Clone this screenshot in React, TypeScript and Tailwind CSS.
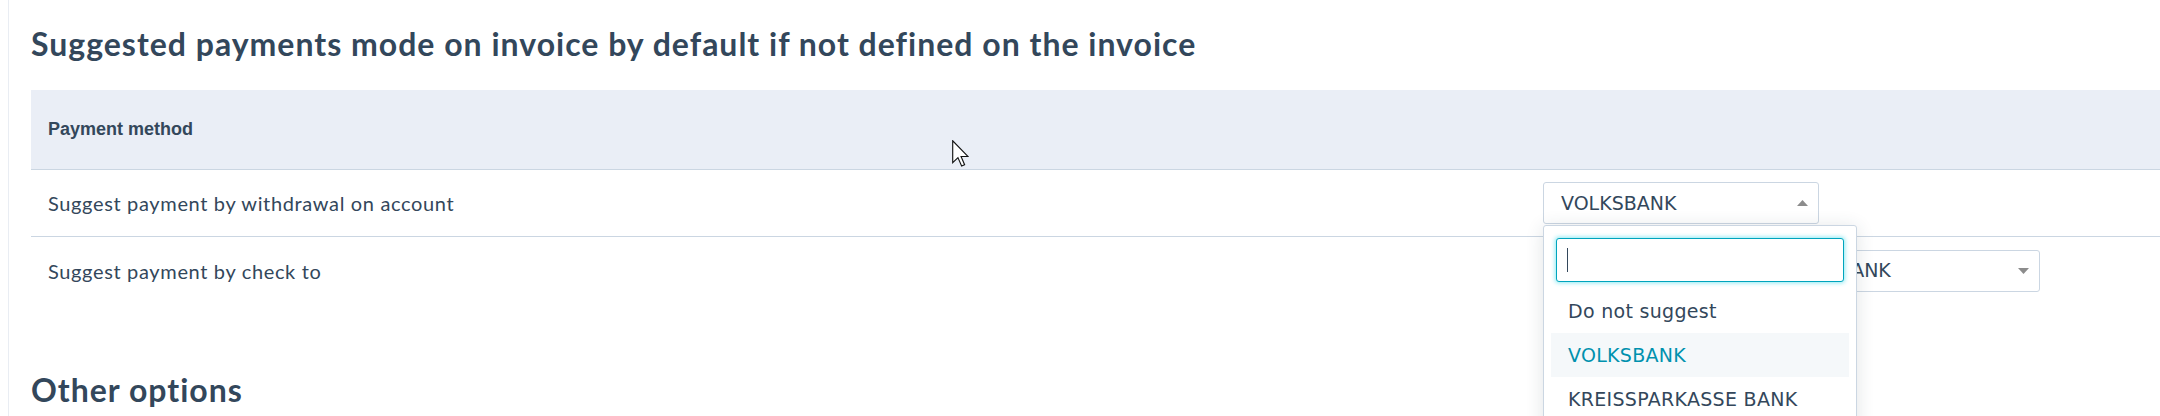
import React from "react";

const geo = { fontFamily: "Lato, 'Open Sans', sans-serif" };
const wide = { fontFamily: "'DejaVu Sans', Verdana, sans-serif" };

function Caret({ up }: { up?: boolean }) {
  return (
    <svg width="11" height="6" viewBox="0 0 11 6" className="shrink-0">
      {up ? (
        <path d="M0 6 L5.5 0 L11 6 Z" fill="#8c8c8c" />
      ) : (
        <path d="M0 0 L5.5 6 L11 0 Z" fill="#8c8c8c" />
      )}
    </svg>
  );
}

function BankSelect({
  value,
  open,
  className,
}: {
  value: string;
  open?: boolean;
  className: string;
}) {
  return (
    <div
      className={`flex h-[42px] items-center justify-between rounded-[3px] border border-[#cbd6e2] bg-white pl-[17px] pr-[10px] text-[19px] text-[#33475b] ${className}`}
      style={wide}
    >
      <span>{value}</span>
      <Caret up={open} />
    </div>
  );
}

const options = ["Do not suggest", "VOLKSBANK", "KREISSPARKASSE BANK", "POSTBANK"];

function DropdownPanel() {
  return (
    <div className="absolute left-0 top-[43px] z-10 h-[220px] w-[314px] rounded-t-[3px] border border-[#cbd6e2] bg-white shadow-[0_2px_18px_0_rgba(45,62,80,0.14)]">
      <div className="px-[12px] pt-[12px]">
        <div className="flex h-[44px] items-center rounded-[3px] border border-[#00a4bd] bg-white pl-[10px] shadow-[0_0_4px_1px_rgba(0,208,228,0.45)]">
          <span className="h-[24px] w-px bg-[#33475b]" />
        </div>
      </div>
      <ul className="px-[7px] pt-[7px]" style={wide}>
        {options.map((o) => (
          <li
            key={o}
            className={`flex h-[44px] items-center whitespace-nowrap px-[17px] text-[19px] tracking-[0.3px] ${
              o === "VOLKSBANK"
                ? "bg-[#f5f8fa] text-[#0091ae]"
                : "text-[#33475b]"
            }`}
          >
            {o}
          </li>
        ))}
      </ul>
    </div>
  );
}

function MouseCursor() {
  return (
    <svg
      className="pointer-events-none absolute left-[952px] top-[140px] z-20"
      width="17"
      height="27"
      viewBox="0 0 12 19"
    >
      <path
        d="M0.5 0.5 L0.5 16 L4.2 12.4 L6.8 18.3 L8.9 17.4 L6.4 11.6 L11.2 11.6 Z"
        fill="#ffffff"
        stroke="#111111"
        strokeWidth="0.8"
        strokeLinejoin="miter"
      />
    </svg>
  );
}

export default function App() {
  return (
    <div className="relative h-[416px] overflow-hidden bg-white pl-[8px]">
      <MouseCursor />
      <div className="h-full border-l border-[#e9edf3] pl-[22px]">
        <h2
          className="pt-[24px] text-[32px] font-bold leading-[40px] tracking-[1px] text-[#33475b]"
          style={geo}
        >
          Suggested payments mode on invoice by default if not defined on the invoice
        </h2>

        <div className="mt-[26px]">
          <div className="flex h-[80px] items-center border-b border-[#cbd6e2] bg-[#eaeef6] pl-[17px]">
            <span
              className="text-[18px] font-bold text-[#33475b]"
              style={{ fontFamily: "'Liberation Sans', Arial, sans-serif" }}
            >
              Payment method
            </span>
          </div>

          <div className="grid h-[67px] grid-cols-[1512px_1fr] items-center border-b border-[#cbd6e2]">
            <span
              className="pl-[17px] text-[20px] tracking-[0.65px] text-[#33475b]"
              style={geo}
            >
              Suggest payment by withdrawal on account
            </span>
            <div className="relative">
              <BankSelect value="VOLKSBANK" open className="w-[276px]" />
              <DropdownPanel />
            </div>
          </div>

          <div className="grid h-[67px] grid-cols-[1512px_1fr] items-center">
            <span
              className="pl-[17px] text-[20px] tracking-[0.65px] text-[#33475b]"
              style={geo}
            >
              Suggest payment by check to
            </span>
            <div>
              <BankSelect value="KREISSPARKASSE BANK" className="ml-[106px] w-[391px]" />
            </div>
          </div>
        </div>

        <h2
          className="mt-[66px] text-[32px] font-bold leading-[40px] tracking-[1px] text-[#33475b]"
          style={geo}
        >
          Other options
        </h2>
      </div>
    </div>
  );
}
